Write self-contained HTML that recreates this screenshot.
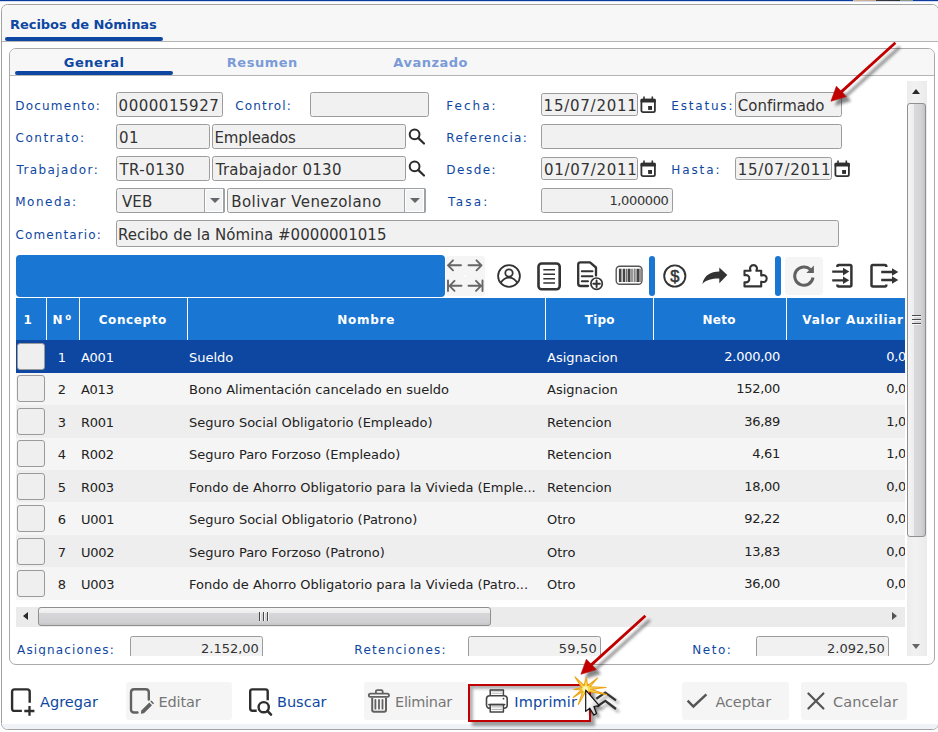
<!DOCTYPE html>
<html lang="es">
<head>
<meta charset="utf-8">
<title>Recibos de Nóminas</title>
<style>
*{box-sizing:border-box;margin:0;padding:0}
html,body{width:938px;height:732px;overflow:hidden;background:#fff}
body{position:relative;font-family:"DejaVu Sans","Liberation Sans",sans-serif;font-size:13px;color:#222}
.abs{position:absolute}
#topline{left:0;top:0;width:938px;height:1px;background:linear-gradient(90deg,#0b3b9e 853px,#d6b49c 853px,#c9a58c 876px,#3b3b3b 876px,#2e2e2e 900px,#8c9a84 900px,#8c9a84 913px,#0b3b9e 913px);box-shadow:0 1px 0 rgba(11,59,158,.18)}
#botline{left:0;bottom:0;width:100%;height:5px;background:#eff3f7}
#outer{left:1px;top:4px;width:938px;height:726px;border:1px solid #a2a2a2;border-radius:6.5px;background:#fff;overflow:hidden}
#outerhead{left:0;top:0;width:100%;height:37px;background:#f7f7f7;border-bottom:1px solid #b5b5b5}
#t1{font-weight:bold;font-size:13px;color:#0d47a1;white-space:nowrap;line-height:16px}
#titlebar{left:5px;top:37px;width:158px;height:4px;background:#0d47a1;border-radius:2px}
#inner{left:9px;top:48px;width:926px;height:617px;border:1px solid #a9a9a9;border-radius:7px;background:#fff;overflow:hidden}
#innerhead{left:0;top:0;width:100%;height:27px;background:#f7f7f7;border-bottom:1px solid #b5b5b5}
.tab{top:56px;font-weight:bold;font-size:13px;letter-spacing:.9px;line-height:14px;color:#7b9bd8;white-space:nowrap}
.tab.on{color:#0d47a1}
#tabbar{left:15px;top:71px;width:158px;height:4px;background:#0d47a1;border-radius:2px}
.lbl{color:#0d47a1;font-size:12px;letter-spacing:1.1px;line-height:16px;white-space:nowrap}
.inp{height:25px;border:1px solid #9c9c9c;border-radius:2.5px;background:#f1f1f1;overflow:hidden}
.tx{color:#333;font-size:15px;line-height:18px;white-space:nowrap}
.tx.s{font-size:13px;line-height:16px}
.dd{width:21px;height:25px;border:1px solid #9ea3a8;border-width:1px 2px 1px 1px;border-radius:2px;background:#f3f3f3;box-shadow:inset 0 0 0 1px #fff}
.dd:after{content:"";position:absolute;left:4.500px;top:9px;border:5px solid transparent;border-top:5.500px solid #63676c;border-bottom:0}
.th{top:298px;height:42px;background:#1976d2;border-left:1px solid #fff}
.tht{top:312px;color:#fff;font-weight:bold;font-size:12px;letter-spacing:.8px;line-height:16px;white-space:nowrap}
.row{left:16px;width:889px}
.c{font-size:13px;color:#222;line-height:16px;white-space:nowrap}
.c.w{color:#fff}
.n{letter-spacing:-.27px}
.cb{left:17px;width:28px;height:27px;border:1px solid #9a9a9a;border-radius:3px;background:#efefef}
.btn{top:682px;height:38px;border-radius:3px}
.btn.g{background:#f5f5f5}
.bt{top:693px;font-size:14.5px;line-height:18px;color:#0d47a1;white-space:nowrap}
.bt.g{color:#757575}
svg{position:absolute;overflow:visible}
</style>
</head>
<body>
<svg width="0" height="0" style="left:0;top:0"><defs>
<g id="cal"><rect x="1.400" y="3.600" width="13.500" height="12.600" rx="1.600" fill="none" stroke="#303030" stroke-width="1.800"/><rect x="0.500" y="2.700" width="15.300" height="3.900" rx="1" fill="#303030"/><rect x="3.200" y="0.500" width="1.600" height="3" fill="#303030"/><rect x="11.500" y="0.500" width="1.600" height="3" fill="#303030"/><rect x="8.100" y="10" width="3.900" height="3.900" fill="#303030"/></g>
<g id="mag" fill="none" stroke="#2b2b2b" stroke-width="2" stroke-linecap="round"><circle cx="6.600" cy="7.350" r="4.900"/><path d="M10.400 11.100L16 16.500" stroke-width="2.200"/></g>
</defs></svg>
<div class="abs" id="topline"></div>
<div class="abs" id="outer"><div class="abs" id="outerhead"></div><div class="abs" id="botline"></div></div>
<div class="abs" id="t1" style="left:10.03px;letter-spacing:-0.055px;top:17px">Recibos de Nóminas</div>
<div class="abs" id="titlebar"></div>
<div class="abs" id="inner"><div class="abs" id="innerhead"></div></div>
<div class="abs tab on" id="t2" style="left:63.82px;letter-spacing:0.510px">General</div>
<div class="abs tab" id="t3" style="left:226.83px;letter-spacing:0.508px">Resumen</div>
<div class="abs tab" id="t4" style="left:393.31px;letter-spacing:0.512px">Avanzado</div>
<div class="abs" id="tabbar"></div>
<!--FORM-->
<div class="abs lbl" id="l1" style="left:15.17px;letter-spacing:1.229px;top:98px">Documento:</div>
<div class="abs inp" style="left:116px;top:92px;width:107px;height:25px"></div>
<div class="abs tx" id="f1" style="left:118.55px;letter-spacing:0.537px;top:97px">0000015927</div>
<div class="abs lbl" id="l2" style="left:235.19px;letter-spacing:1.179px;top:98px">Control:</div>
<div class="abs inp" style="left:310px;top:92px;width:119px;height:25px"></div>
<div class="abs lbl" id="l3" style="left:446.34px;letter-spacing:2.007px;top:98px">Fecha:</div>
<div class="abs inp" style="left:541px;top:93px;width:97px;height:23px"></div>
<div class="abs tx" id="f2" style="left:543.62px;letter-spacing:0.755px;top:97px">15/07/2011</div>
<svg style="left:640px;top:96px" width="17" height="18" viewBox="0 0 17 18"><use href="#cal"/></svg>
<div class="abs lbl" id="l4" style="left:671.33px;letter-spacing:1.806px;top:98px">Estatus:</div>
<div class="abs inp" style="left:735px;top:92px;width:107px;height:25px"></div>
<div class="abs tx" id="f3" style="left:737.85px;letter-spacing:-0.036px;top:97px">Confirmado</div>
<div class="abs lbl" id="l5" style="left:15.56px;letter-spacing:1.511px;top:130px">Contrato:</div>
<div class="abs inp" style="left:116px;top:124px;width:94px;height:25px"></div>
<div class="abs tx" id="f4" style="left:118.88px;letter-spacing:0.465px;top:129px">01</div>
<div class="abs inp" style="left:212px;top:124px;width:194px;height:25px"></div>
<div class="abs tx" id="f5" style="left:214.55px;letter-spacing:-0.168px;top:129px">Empleados</div>
<svg style="left:408px;top:127px" width="19" height="19" viewBox="0 0 19 19"><use href="#mag"/></svg>
<div class="abs lbl" id="l6" style="left:446.34px;letter-spacing:1.257px;top:130px">Referencia:</div>
<div class="abs inp" style="left:541px;top:124px;width:301px;height:25px"></div>
<div class="abs lbl" id="l7" style="left:16.42px;letter-spacing:1.409px;top:162px">Trabajador:</div>
<div class="abs inp" style="left:116px;top:156px;width:94px;height:25px"></div>
<div class="abs tx" id="f6" style="left:119.51px;letter-spacing:0.424px;top:161px">TR-0130</div>
<div class="abs inp" style="left:212px;top:156px;width:194px;height:25px"></div>
<div class="abs tx" id="f7" style="left:215.73px;letter-spacing:0.253px;top:161px">Trabajador 0130</div>
<svg style="left:408px;top:159px" width="19" height="19" viewBox="0 0 19 19"><use href="#mag"/></svg>
<div class="abs lbl" id="l8" style="left:446.34px;letter-spacing:1.478px;top:162px">Desde:</div>
<div class="abs inp" style="left:541px;top:157px;width:97px;height:23px"></div>
<div class="abs tx" id="f8" style="left:544.00px;letter-spacing:0.693px;top:161px">01/07/2011</div>
<svg style="left:640px;top:160px" width="17" height="18" viewBox="0 0 17 18"><use href="#cal"/></svg>
<div class="abs lbl" id="l9" style="left:671.33px;letter-spacing:1.886px;top:162px">Hasta:</div>
<div class="abs inp" style="left:735px;top:157px;width:97px;height:23px"></div>
<div class="abs tx" id="f9" style="left:737.80px;letter-spacing:0.697px;top:161px">15/07/2011</div>
<svg style="left:834px;top:160px" width="17" height="18" viewBox="0 0 17 18"><use href="#cal"/></svg>
<div class="abs lbl" id="l10" style="left:15.17px;letter-spacing:1.544px;top:194px">Moneda:</div>
<div class="abs inp" style="left:116px;top:188px;width:109px;height:25px"></div>
<div class="abs tx" id="f10" style="left:121.98px;letter-spacing:0.110px;top:193px">VEB</div>
<div class="abs dd" style="left:204px;top:188px"></div>
<div class="abs inp" style="left:227px;top:188px;width:199px;height:25px"></div>
<div class="abs tx" id="f11" style="left:231.31px;letter-spacing:0.400px;top:193px">Bolivar Venezolano</div>
<div class="abs dd" style="left:404px;top:188px;width:22px"></div>
<div class="abs lbl" id="l11" style="left:448.11px;letter-spacing:2.233px;top:194px">Tasa:</div>
<div class="abs inp" style="left:541px;top:188px;width:132px;height:25px"></div>
<div class="abs tx s" id="f12" style="left:609.43px;letter-spacing:-0.369px;top:193px">1,000000</div>
<div class="abs lbl" id="l12" style="left:15.56px;letter-spacing:1.104px;top:227px">Comentario:</div>
<div class="abs inp" style="left:116px;top:220px;width:723px;height:27px"></div>
<div class="abs tx" id="f13" style="left:117.96px;letter-spacing:0.045px;top:226px">Recibo de la Nómina #0000001015</div>
<!--TOOLBAR-->
<div class="abs" style="left:16px;top:255px;width:429px;height:42px;background:#1976d2;border-radius:4px"></div>
<div class="abs" style="left:446px;top:256px;width:39px;height:40px;background:#f5f5f5;border-radius:3px"></div>
<svg style="left:446px;top:256px" width="39" height="40" viewBox="0 0 39 40" fill="none" stroke="#666" stroke-width="1.900" stroke-linecap="round" stroke-linejoin="round">
<path d="M2 9.300H15M7 4.300L2 9.300L7 14.300"/><path d="M22.500 9.300H35.500M30.500 4.300L35.500 9.300L30.500 14.300"/>
<path d="M2 24.500V35M3.500 29.800H15.500M8.500 24.800L3.500 29.800L8.500 34.800"/><path d="M36.500 24.500V35M35 29.800H22.500M30 24.800L35 29.800L30 34.800"/>
</svg>
<svg style="left:497px;top:263.600px" width="24" height="24" viewBox="0 0 24 24" fill="none" stroke="#333" stroke-width="1.800">
<circle cx="12" cy="12" r="10.900"/><circle cx="12" cy="9" r="3.700"/><path d="M3.800 18.800C6 14.800 9.500 13.600 12 13.600C14.500 13.600 18 14.800 20.200 18.800"/>
</svg>
<svg style="left:537px;top:261.600px" width="24" height="29" viewBox="0 0 24 29" fill="none" stroke="#333">
<rect x="1.500" y="1.500" width="21.200" height="25.800" rx="3.200" stroke-width="2.600"/>
<path d="M6.300 7.700H18M6.300 12.200H18M6.300 16.800H18M6.300 21.100H18" stroke-width="1.500"/>
</svg>
<svg style="left:577px;top:261px" width="28" height="30" viewBox="0 0 28 30" fill="none" stroke="#333" stroke-linecap="round" stroke-linejoin="round">
<path d="M11 25H3.500Q1.200 25 1.200 22.800V3.500Q1.200 1.400 3.500 1.400H13L19 6.500V14.500" stroke-width="2.300"/>
<path d="M4.800 10.200H15.500M4.800 15.200H15.500M4.800 20.200H11" stroke-width="2"/>
<circle cx="19.600" cy="22.700" r="5.700" stroke-width="1.700" fill="#fff"/><path d="M16.300 22.700H22.900M19.600 19.400V26" stroke-width="1.900"/>
</svg>
<svg style="left:615px;top:265px" width="28" height="20" viewBox="0 0 28 20" fill="none" stroke="#444">
<rect x="1.200" y="1.200" width="25.800" height="18" rx="3.500" stroke-width="1.400" stroke="#555"/>
<path d="M5.200 3.800V17M9 3.800V17M14.200 3.800V17M22.800 3.800V17" stroke-width="2.600"/><path d="M11.800 3.800V17M17 3.800V17M19.600 3.800V17M25 3.800V17" stroke-width="1.100"/><path d="M19.600 3.800V17" stroke="#888" stroke-width="2"/>
</svg>
<div class="abs" style="left:649px;top:256px;width:6px;height:40px;background:#1976d2;border-radius:3px"></div>
<svg style="left:663px;top:263.500px" width="24" height="24" viewBox="0 0 24 24" fill="none" stroke="#333">
<circle cx="11.800" cy="12" r="10.600" stroke-width="1.900"/>
<text x="11.800" y="17.600" text-anchor="middle" font-family="Liberation Sans, sans-serif" font-size="16.500" fill="#333" stroke="#333" stroke-width="0.500">$</text>
</svg>
<svg style="left:702px;top:266.500px" width="26" height="18" viewBox="0 0 26 18">
<path d="M0.300 17C2.500 8 8.500 4.800 17.300 4.600V0.400L25.300 8L17.300 16.300V11.600C10 11.500 4.500 12.800 0.300 17Z" fill="#333"/>
</svg>
<svg style="left:743px;top:264px" width="25" height="24" viewBox="0 0 25 24" fill="none" stroke="#333" stroke-width="2.100" stroke-linejoin="round">
<path d="M1.500 6.800H7.600C6.200 3.800 7.800 1.100 10.500 1.100C13.200 1.100 14.800 3.800 13.400 6.800H18.200V11.600C21.400 10.300 23.700 12 23.700 14.600C23.700 17.200 21.400 18.900 18.200 17.600V22.400H1.500V18.200C4.800 18.900 6.300 17.300 6.300 14.700C6.300 12.100 4.800 10.600 1.500 11.300Z"/>
</svg>
<div class="abs" style="left:775px;top:256px;width:6px;height:40px;background:#1976d2;border-radius:3px"></div>
<div class="abs" style="left:785px;top:257px;width:38px;height:38px;background:#f5f5f5;border-radius:3px"></div>
<svg style="left:792px;top:264px" width="24" height="24" viewBox="0 0 24 24" fill="none" stroke="#616161" stroke-width="3">
<path d="M18.600 5.800A9.200 9.200 0 1 0 21 13.500"/><path d="M21.900 1.400V9H14.300Z" fill="#616161" stroke="none"/>
</svg>
<svg style="left:831px;top:262px" width="24" height="27" viewBox="0 0 24 27" fill="none" stroke="#333" stroke-width="2.500" stroke-linejoin="round">
<path d="M6.400 5V4.300Q6.400 2.900 7.800 2.900H19Q20.400 2.900 20.400 4.300V23Q20.400 24.400 19 24.400H7.800Q6.400 24.400 6.400 23V22.400"/>
<path d="M1.200 9.600H13M1.200 18.300H13" stroke-width="2.300"/><path d="M12 5.800L18.300 9.600L12 13.400ZM12 14.500L18.300 18.300L12 22.100Z" fill="#333" stroke="none"/>
</svg>
<svg style="left:869px;top:262px" width="30" height="27" viewBox="0 0 30 27" fill="none" stroke="#333" stroke-width="2.500" stroke-linejoin="round">
<path d="M17.300 5V4.300Q17.300 2.900 15.900 2.900H3.900Q2.500 2.900 2.500 4.300V23Q2.500 24.400 3.900 24.400H15.900Q17.300 24.400 17.300 23V22.400"/>
<path d="M12.200 10H24M12.200 18H24" stroke-width="2.300"/><path d="M23 6.200L29.300 10L23 13.800ZM23 14.200L29.300 18L23 21.800Z" fill="#333" stroke="none"/>
</svg>

<!--TABLE-->
<div class="abs" style="left:16px;top:298px;width:889px;height:42px;background:#1976d2"></div>
<div class="abs tht" id="h0" style="left:23.59px;letter-spacing:43.295px">1</div>
<div class="abs th" style="left:46px;width:1px"></div>
<div class="abs tht" id="h1" style="left:52.48px;letter-spacing:2.810px">N<span style="font-family:'Noto Sans CJK SC',NanumGothic,sans-serif;font-size:14px;line-height:10px;position:relative;top:2px">º</span></div>
<div class="abs th" style="left:79px;width:1px"></div>
<div class="abs tht" id="h2" style="left:98.72px;letter-spacing:0.598px">Concepto</div>
<div class="abs th" style="left:187px;width:1px"></div>
<div class="abs tht" id="h3" style="left:337.26px;letter-spacing:0.748px">Nombre</div>
<div class="abs th" style="left:545px;width:1px"></div>
<div class="abs tht" id="h4" style="left:584.82px;letter-spacing:0.187px">Tipo</div>
<div class="abs th" style="left:653px;width:1px"></div>
<div class="abs tht" id="h5" style="left:702.38px;letter-spacing:0.331px">Neto</div>
<div class="abs th" style="left:786px;width:1px"></div>
<div class="abs tht" id="h6" style="left:802.35px;letter-spacing:0.733px">Valor Auxiliar</div>
<div class="abs row" style="top:340px;height:33px;background:#0d47a1"></div><div class="abs cb" style="top:343px"></div>
<div class="abs c w" style="left:46px;width:20px;text-align:right;top:350px">1</div><div class="abs c n w" style="left:81px;top:350px">A001</div><div class="abs c w" style="left:189px;top:350px">Sueldo</div><div class="abs c w" style="left:547px;top:350px">Asignacion</div><div class="abs c n w" style="left:653px;width:127px;text-align:right;top:349px">2.000,00</div><div class="abs c n w" style="left:785px;width:120px;text-align:right;overflow:hidden;top:349px"><span style="margin-right:-1px">0,0</span></div>
<div class="abs row" style="top:373px;height:32px;background:#f5f5f5"></div><div class="abs cb" style="top:375px"></div>
<div class="abs c" style="left:46px;width:20px;text-align:right;top:382px">2</div><div class="abs c n" style="left:81px;top:382px">A013</div><div class="abs c" style="left:189px;top:382px">Bono Alimentación cancelado en sueldo</div><div class="abs c" style="left:547px;top:382px">Asignacion</div><div class="abs c n" style="left:653px;width:127px;text-align:right;top:381px">152,00</div><div class="abs c n" style="left:785px;width:120px;text-align:right;overflow:hidden;top:381px"><span style="margin-right:-1px">0,0</span></div>
<div class="abs row" style="top:405px;height:33px;background:#eeeeee"></div><div class="abs cb" style="top:408px"></div>
<div class="abs c" style="left:46px;width:20px;text-align:right;top:415px">3</div><div class="abs c n" style="left:81px;top:415px">R001</div><div class="abs c" style="left:189px;top:415px">Seguro Social Obligatorio (Empleado)</div><div class="abs c" style="left:547px;top:415px">Retencion</div><div class="abs c n" style="left:653px;width:127px;text-align:right;top:414px">36,89</div><div class="abs c n" style="left:785px;width:120px;text-align:right;overflow:hidden;top:414px"><span style="margin-right:-1px">1,0</span></div>
<div class="abs row" style="top:438px;height:32px;background:#f5f5f5"></div><div class="abs cb" style="top:440px"></div>
<div class="abs c" style="left:46px;width:20px;text-align:right;top:447px">4</div><div class="abs c n" style="left:81px;top:447px">R002</div><div class="abs c" style="left:189px;top:447px">Seguro Paro Forzoso (Empleado)</div><div class="abs c" style="left:547px;top:447px">Retencion</div><div class="abs c n" style="left:653px;width:127px;text-align:right;top:446px">4,61</div><div class="abs c n" style="left:785px;width:120px;text-align:right;overflow:hidden;top:446px"><span style="margin-right:-1px">1,0</span></div>
<div class="abs row" style="top:470px;height:32px;background:#eeeeee"></div><div class="abs cb" style="top:473px"></div>
<div class="abs c" style="left:46px;width:20px;text-align:right;top:480px">5</div><div class="abs c n" style="left:81px;top:480px">R003</div><div class="abs c" style="left:189px;top:480px">Fondo de Ahorro Obligatorio para la Vivieda (Emple...</div><div class="abs c" style="left:547px;top:480px">Retencion</div><div class="abs c n" style="left:653px;width:127px;text-align:right;top:479px">18,00</div><div class="abs c n" style="left:785px;width:120px;text-align:right;overflow:hidden;top:479px"><span style="margin-right:-1px">0,0</span></div>
<div class="abs row" style="top:502px;height:33px;background:#f5f5f5"></div><div class="abs cb" style="top:505px"></div>
<div class="abs c" style="left:46px;width:20px;text-align:right;top:512px">6</div><div class="abs c n" style="left:81px;top:512px">U001</div><div class="abs c" style="left:189px;top:512px">Seguro Social Obligatorio (Patrono)</div><div class="abs c" style="left:547px;top:512px">Otro</div><div class="abs c n" style="left:653px;width:127px;text-align:right;top:511px">92,22</div><div class="abs c n" style="left:785px;width:120px;text-align:right;overflow:hidden;top:511px"><span style="margin-right:-1px">0,0</span></div>
<div class="abs row" style="top:535px;height:32px;background:#eeeeee"></div><div class="abs cb" style="top:538px"></div>
<div class="abs c" style="left:46px;width:20px;text-align:right;top:545px">7</div><div class="abs c n" style="left:81px;top:545px">U002</div><div class="abs c" style="left:189px;top:545px">Seguro Paro Forzoso (Patrono)</div><div class="abs c" style="left:547px;top:545px">Otro</div><div class="abs c n" style="left:653px;width:127px;text-align:right;top:544px">13,83</div><div class="abs c n" style="left:785px;width:120px;text-align:right;overflow:hidden;top:544px"><span style="margin-right:-1px">0,0</span></div>
<div class="abs row" style="top:567px;height:33px;background:#f5f5f5"></div><div class="abs cb" style="top:570px"></div>
<div class="abs c" style="left:46px;width:20px;text-align:right;top:577px">8</div><div class="abs c n" style="left:81px;top:577px">U003</div><div class="abs c" style="left:189px;top:577px">Fondo de Ahorro Obligatorio para la Vivieda (Patro...</div><div class="abs c" style="left:547px;top:577px">Otro</div><div class="abs c n" style="left:653px;width:127px;text-align:right;top:576px">36,00</div><div class="abs c n" style="left:785px;width:120px;text-align:right;overflow:hidden;top:576px"><span style="margin-right:-1px">0,0</span></div>
<div class="abs" style="left:16px;top:607px;width:889px;height:20px;background:#ebebeb"></div>
<div class="abs" style="left:38px;top:607px;width:453px;height:19px;border:1px solid #909090;border-radius:3px;background:linear-gradient(#f6f6f6,#ededed 27%,#d7d7d9 31%,#d0d0d2 85%,#c4c4c6)"></div>
<div class="abs" style="left:259px;top:612px;width:10px;height:9px;background:repeating-linear-gradient(90deg,#4a4a4a 0 1px,#f4f4f4 1px 2px,transparent 2px 4px)"></div>
<div class="abs" style="left:22.500px;top:611.700px;border:4.700px solid transparent;border-right:5.500px solid #2a2a2a;border-left:0"></div>
<div class="abs" style="left:892px;top:612px;border:4.600px solid transparent;border-left:5.200px solid #555;border-right:0"></div>
<div class="abs" style="left:907px;top:81px;width:20px;height:575px;background:linear-gradient(90deg,#ececec,#f2f2f2 40%,#ebebeb)"></div>
<div class="abs" style="left:907px;top:103px;width:19px;height:434px;border:1px solid #909090;border-radius:3px;background:linear-gradient(90deg,#f6f6f6,#ededed 33%,#d9d9db 37%,#d2d2d4 80%,#c2c2c4)"></div>
<div class="abs" style="left:911.700px;top:88.700px;border:4.700px solid transparent;border-bottom:5.300px solid #2a2a2a;border-top:0"></div>
<div class="abs" style="left:911.600px;top:643.700px;border:4.900px solid transparent;border-top:5.500px solid #666;border-bottom:0"></div>
<div class="abs" style="left:912px;top:315px;width:9px;height:10px;background:repeating-linear-gradient(#4a4a4a 0 1px,#f4f4f4 1px 2px,transparent 2px 4px)"></div>
<div class="abs" style="left:464px;top:275px;width:2px;height:2px;background:#fff;border-radius:1px"></div>

<!--TOTALS-->
<div class="abs" style="left:11px;top:630px;width:896px;height:26px;overflow:hidden">
<div class="abs lbl" id="l13" style="left:17.03px;letter-spacing:1.155px;top:642px;margin:-630px 0 0 -11px">Asignaciones:</div>
<div class="abs inp" style="left:119px;top:6px;width:133px"></div>
<div class="abs tx s" id="f14" style="left:201.00px;letter-spacing:0.000px;top:641px;margin:-630px 0 0 -11px">2.152,00</div>
<div class="abs lbl" id="l14" style="left:354.34px;letter-spacing:1.259px;top:642px;margin:-630px 0 0 -11px">Retenciones:</div>
<div class="abs inp" style="left:457px;top:6px;width:133px"></div>
<div class="abs tx s" id="f15" style="left:558.67px;letter-spacing:0.228px;top:641px;margin:-630px 0 0 -11px">59,50</div>
<div class="abs lbl" id="l15" style="left:692.33px;letter-spacing:1.509px;top:642px;margin:-630px 0 0 -11px">Neto:</div>
<div class="abs inp" style="left:745px;top:6px;width:133px"></div>
<div class="abs tx s" id="f16" style="left:827.00px;letter-spacing:0.000px;top:641px;margin:-630px 0 0 -11px">2.092,50</div>
</div>
<!--BUTTONS-->
<svg style="left:10px;top:688px" width="26" height="29" viewBox="0 0 26 29" fill="none" stroke="#2e2e2e" stroke-width="2.400" stroke-linejoin="round">
<path d="M11.900 22.900H4.600Q2.100 22.900 2.100 20.400V3.900Q2.100 1.400 4.600 1.400H17.200Q19.700 1.400 19.700 3.900V14.700"/><path d="M19.500 18.100V27.800M14.300 23H24.400" stroke-width="2.300"/>
</svg>
<div class="abs btn g" style="left:126px;width:106px"></div>
<svg style="left:130px;top:688px" width="26" height="27" viewBox="0 0 26 27" fill="none" stroke="#616161" stroke-width="2.300" stroke-linecap="round" stroke-linejoin="round">
<path d="M7.500 24.500H4.200Q1 24.500 1 21.300V4.400Q1 1.200 4.200 1.200H15.600Q18.800 1.200 18.800 4.400V11.500" stroke-width="2.400"/><path d="M10.800 25.700L11.300 22.600L19.300 14.600L22 17.300L14 25.300Z" fill="#616161" stroke="none"/><path d="M20.300 13.600L21.400 12.500L24.100 15.200L23 16.300Z" fill="#616161" stroke="none"/>
</svg>
<svg style="left:248px;top:688px" width="26" height="29" viewBox="0 0 26 29" fill="none" stroke="#2e2e2e" stroke-width="2.400" stroke-linejoin="round">
<path d="M8.700 22.800H4.400Q2.200 22.800 2.200 20.600V3.600Q2.200 1.400 4.400 1.400H17.500Q19.700 1.400 19.700 3.600V12.200"/><circle cx="15.700" cy="19.200" r="5.100"/><path d="M19.400 22.900L23 26.600" stroke-width="2.600" stroke-linecap="round"/>
</svg>
<div class="abs btn g" style="left:364px;width:104px"></div>
<svg style="left:367px;top:688px" width="24" height="26" viewBox="0 0 24 26" fill="none" stroke="#616161" stroke-width="2" stroke-linejoin="round">
<path d="M8.900 5.600V3.600Q8.900 2.100 10.400 2.100H14.200Q15.700 2.100 15.700 3.600V5.600" stroke-width="1.800"/><rect x="1.800" y="5.600" width="20.200" height="3.300" rx="1.600" stroke-width="1.800"/>
<path d="M5.200 9.800V22Q5.200 23.800 7 23.800H17.200Q19 23.800 19 22V9.800"/><path d="M8.400 12V20.700M12 12V20.700M15.500 12V20.700" stroke-width="1.800" stroke-linecap="round"/>
</svg>
<svg style="left:485px;top:688px" width="24" height="26" viewBox="0 0 24 26" fill="none" stroke="#444" stroke-width="1.600" stroke-linejoin="round">
<path d="M6.500 3.800H17M6.500 5.500H17" stroke="#c4c4c4" stroke-width="0.900"/><path d="M5.200 7.500V2H18.400V7.500" stroke-width="1.500"/>
<rect x="1.500" y="7.700" width="20.700" height="12.600" rx="3.300" fill="#fff"/>
<rect x="5.200" y="16.600" width="13.200" height="7.500" fill="#fff" stroke-width="1.500"/><path d="M3.200 16.600H20.400" stroke-width="1.500"/>
<path d="M6.500 18.900H17M6.500 21.400H17" stroke="#aaa" stroke-width="1"/><circle cx="18.500" cy="10.700" r="0.900" fill="#444" stroke="none"/>
</svg>
<div class="abs btn g" style="left:682px;width:107px"></div>
<svg style="left:686px;top:692px" width="22" height="18" viewBox="0 0 22 18" fill="none" stroke="#555" stroke-width="2.400" stroke-linejoin="miter"><path d="M1.600 8.700L7.400 14.500L20.400 2.300"/></svg>
<div class="abs btn g" style="left:801px;width:106px"></div>
<svg style="left:807px;top:692px" width="20" height="19" viewBox="0 0 20 19" fill="none" stroke="#555" stroke-width="2.200" stroke-linecap="round"><path d="M1.400 1.500L16.400 16.500M16.400 1.500L1.400 16.500"/></svg>

<div class="abs bt" id="b1" style="left:39.97px;letter-spacing:0.034px">Agregar</div>
<div class="abs bt g" id="b2" style="left:158.50px;letter-spacing:-0.163px">Editar</div>
<div class="abs bt" id="b3" style="left:276.96px;letter-spacing:0.008px">Buscar</div>
<div class="abs bt g" id="b4" style="left:395.08px;letter-spacing:-0.328px">Eliminar</div>
<div class="abs bt" id="b5" style="left:514.37px;letter-spacing:0.117px">Imprimir</div>
<div class="abs bt g" id="b6" style="left:715.41px;letter-spacing:-0.099px">Aceptar</div>
<div class="abs bt g" id="b7" style="left:833.00px;letter-spacing:0.128px">Cancelar</div>
<!--ANNOT-->
<div class="abs" style="left:468px;top:684px;width:123px;height:38px;border:2px solid #c00000;box-shadow:4px 4px 3px rgba(0,0,0,.38),inset 4px 4px 3px -1px rgba(0,0,0,.30)"></div>
<svg style="left:0;top:0;z-index:5" width="938" height="732" viewBox="0 0 938 732">
<defs><filter id="sh" x="-30%" y="-30%" width="170%" height="170%"><feGaussianBlur stdDeviation="1.700"/></filter>
<linearGradient id="cg" x1="0" y1="0" x2="1" y2="1"><stop offset="0.400" stop-color="#fff"/><stop offset="1" stop-color="#b0b0b0"/></linearGradient>
<g id="arw"><path d="M64.500 -58.500L9 -8.200" stroke-width="2.800" fill="none" stroke-linecap="butt"/><path d="M0 0L5.500 -15.100L15.300 -4.700Z" stroke-width="0.600" stroke-linejoin="round"/></g>
<g id="cur"><path d="M0 0V21.300L4.100 18.100L8.200 25L10.800 23.400L8.200 16.400L13.500 15.600Z"/></g>
<g id="chv" fill="none" stroke-width="2.300"><path d="M596.300 698.700L605.300 692.600L616 700.400"/><path d="M597.100 706.500L605.300 700.800L616 709"/></g>
</defs>
<use href="#arw" x="835.400" y="105.500" fill="#222" stroke="#222" opacity=".55" filter="url(#sh)"/>
<use href="#arw" x="830.900" y="101.300" fill="#c00000" stroke="#c00000"/>
<use href="#arw" x="585.400" y="678.500" fill="#222" stroke="#222" opacity=".55" filter="url(#sh)"/>
<use href="#arw" x="580.900" y="674.300" fill="#c00000" stroke="#c00000"/>
<use href="#chv" x="3" y="3" stroke="#222" opacity=".4" filter="url(#sh)"/>
<use href="#chv" stroke="#333"/>
<g stroke="#eea51a" stroke-width="1.100" fill="#f9dd55" stroke-linejoin="round">
<path d="M586.300 677.500L587.600 685.800L597.600 678L589.800 686.800L606.200 687.500L590.500 689.300L606.600 694.600L589 691.500L585.500 692L578.300 704.500L582.800 691.200L573.200 697.500L581.500 689.800L573.800 689.500L581.800 687.600L575 676.900L584 685.500Z"/></g>
<circle cx="585.400" cy="688.700" r="2.600" fill="#fdf3b0"/>
<use href="#cur" x="589.200" y="693.600" fill="#222" opacity=".5" filter="url(#sh)"/>
<use href="#cur" x="585.700" y="690.100" fill="url(#cg)" stroke="#111" stroke-width="1.200" stroke-linejoin="round"/>
</svg>

</body>
</html>
